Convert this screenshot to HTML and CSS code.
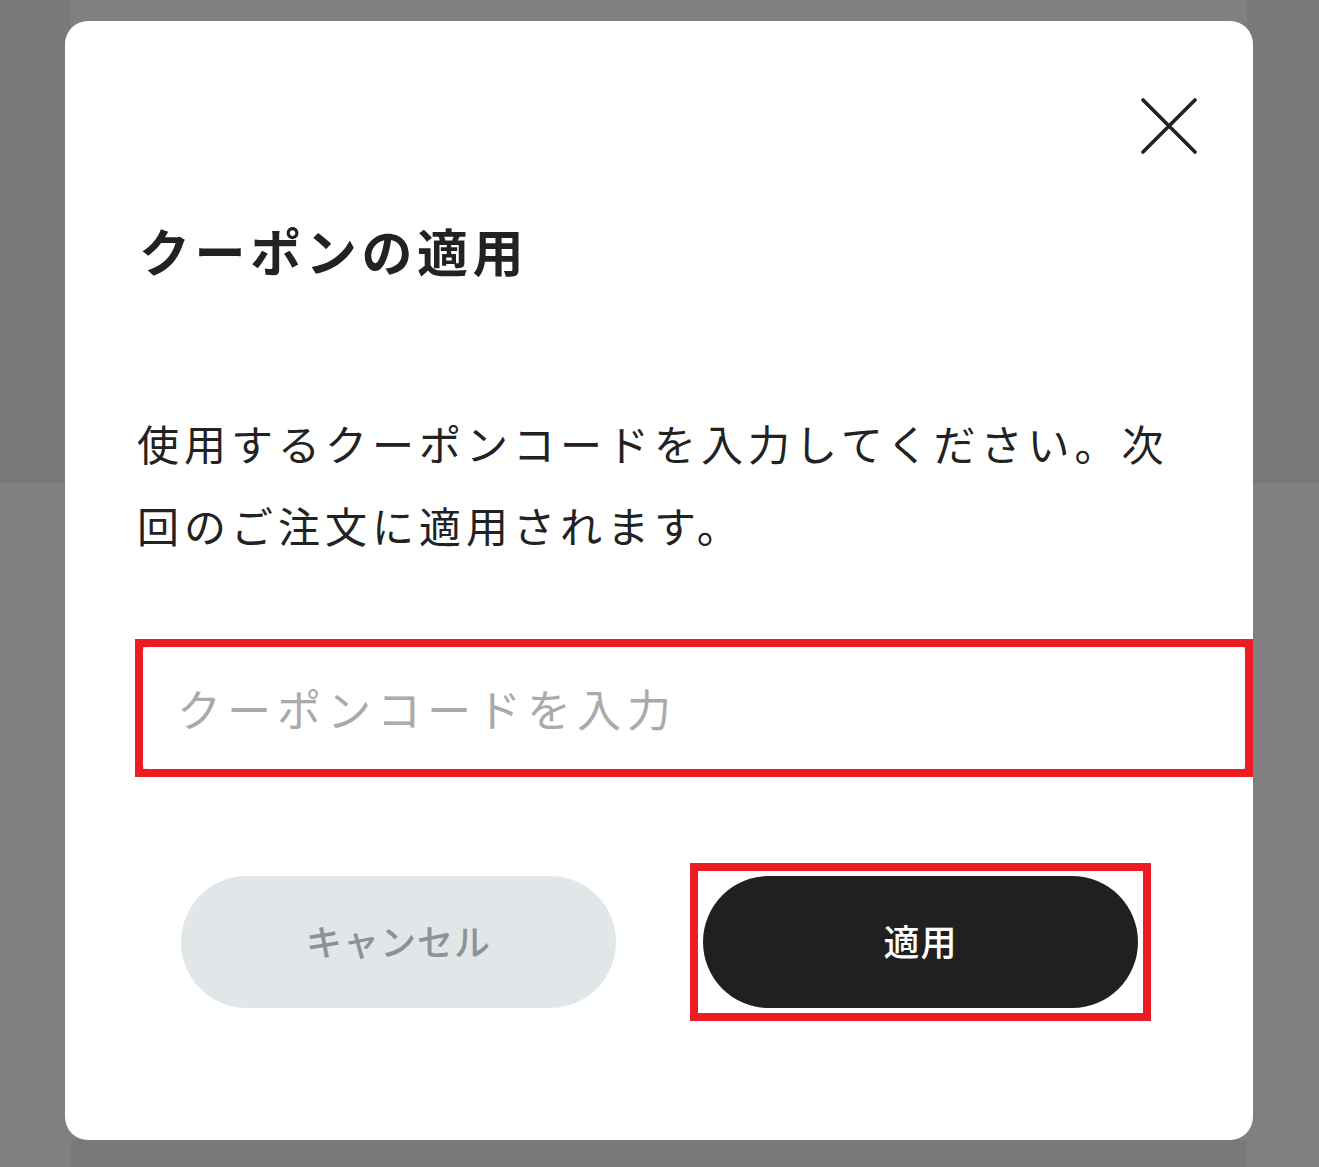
FILE: index.html
```html
<!DOCTYPE html>
<html lang="ja">
<head>
<meta charset="utf-8">
<title>クーポンの適用</title>
<link rel="stylesheet" href="styles.css">
</head>
<body>
<div class="modal">
  <div class="modal-head">
    <button class="close" type="button" aria-label="閉じる">
      <svg width="56" height="56" viewBox="0 0 56 56" aria-hidden="true">
        <path d="M2 2 L54 54 M54 2 L2 54" stroke="#222" stroke-width="3.6" stroke-linecap="round" fill="none"/>
      </svg>
    </button>
  </div>
  <h1 class="title">クーポンの適用</h1>
  <p class="desc">使用するクーポンコードを入力してください。次回のご注文に適用されます。</p>
  <div class="field-mark">
    <input class="field" type="text" placeholder="クーポンコードを入力">
  </div>
  <div class="actions">
    <button class="btn btn-cancel" type="button">キャンセル</button>
    <span class="btn-mark"><button class="btn btn-apply" type="button">適用</button></span>
  </div>
</div>
</body>
</html>
```

FILE: styles.css
```css
html, body {
  margin: 0;
  padding: 0;
}
body {
  width: 1319px;
  height: 1167px;
  overflow: hidden;
  font-family: "Noto Sans CJK JP", "Noto Sans", sans-serif;
  color: #222;
  background:
    linear-gradient(#78797b, #78797b) 0 0 / 71px 483px no-repeat,
    linear-gradient(#78797b, #78797b) 1247px 0 / 72px 483px no-repeat,
    linear-gradient(#78797b, #78797b) 71px 1140px / 1176px 27px no-repeat,
    #808080;
  padding-top: 21px;
  box-sizing: border-box;
}
.modal {
  margin-left: 65px;
  width: 1188px;
  height: 1119px;
  box-sizing: border-box;
  background: #fff;
  border-radius: 23px;
  padding: 77px 0 0 72px;
}
.modal-head {
  display: flex;
  justify-content: flex-end;
  padding-right: 56px;
  height: 56px;
}
.close {
  border: 0;
  background: none;
  padding: 0;
  width: 56px;
  height: 56px;
  display: block;
}
.close svg {
  display: block;
}
.title {
  margin: 61px 0 0;
  font-size: 51px;
  line-height: 70px;
  font-weight: 700;
  letter-spacing: 4.6px;
  padding-left: 2px;
}
.desc {
  margin: 117px 0 0;
  width: 1070px;
  font-size: 42px;
  line-height: 82px;
  letter-spacing: 5px;
  font-weight: 400;
}
.field-mark {
  margin: 73px 0 0 -2px;
  width: 1118px;
  box-sizing: border-box;
  border: 8px solid #ed1c24;
  background: #c9cdcd;
  display: flex;
}
.field {
  flex: 1;
  height: 122px;
  box-sizing: border-box;
  border: 0;
  border-radius: 4px;
  background: #fff;
  padding: 0 0 0 34px;
  font-family: "Noto Sans CJK JP", "Noto Sans", sans-serif;
  font-size: 44px;
  letter-spacing: 6px;
  color: #222;
  outline: none;
}
.field::placeholder {
  color: #aaaaaa;
}
.actions {
  margin-top: 86px;
  display: flex;
  align-items: center;
  gap: 74px;
}
.btn {
  width: 435px;
  height: 132px;
  border: 0;
  border-radius: 66px;
  font-family: "Noto Sans CJK JP", "Noto Sans", sans-serif;
  font-size: 36px;
  font-weight: 500;
  letter-spacing: 1px;
  padding: 0 0 5px;
  display: block;
}
.btn-cancel {
  margin-left: 44px;
  background: #e1e6e9;
  color: #8e9294;
}
.btn-mark {
  display: block;
  border: 8px solid #ed1c24;
  padding: 5px;
}
.btn-apply {
  background: #202020;
  color: #fff;
}
```
